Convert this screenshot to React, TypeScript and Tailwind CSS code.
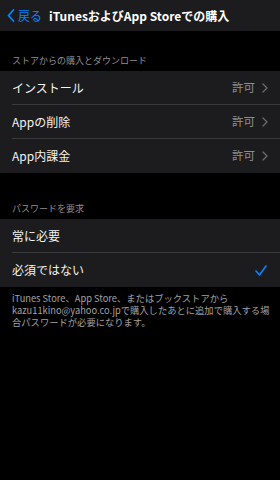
const font = { fontFamily: '"Noto Sans CJK JP", "Noto Sans", sans-serif' };

function Chevron() {
  return (
    <svg width="6" height="10" viewBox="0 0 6 10" className="ml-[7px]">
      <path d="M1 1l4 4-4 4" fill="none" stroke="#6b6b70" strokeWidth="1.3" strokeLinecap="round" strokeLinejoin="round" />
    </svg>
  );
}

function Row({ label, value, last, check }: { label: string; value?: string; last?: boolean; check?: boolean }) {
  return (
    <div className="flex h-[34px] items-center pl-3">
      <div className={`flex h-full flex-1 items-center pr-3 ${last ? "" : "border-b border-[#3a3a3c]"}`}>
        <span className="flex-1 text-[12px] text-[#f2f2f2]">{label}</span>
        {value && (
          <span className="flex items-center text-[11.5px] text-[#8e8e93]">
            {value}
            <Chevron />
          </span>
        )}
        {check && (
          <svg width="12" height="11" viewBox="0 0 12 11" className="mr-[1px]">
            <path d="M1 6l3.5 4L11 1" fill="none" stroke="#0a84ff" strokeWidth="1.6" strokeLinecap="round" strokeLinejoin="round" />
          </svg>
        )}
      </div>
    </div>
  );
}

export default function App() {
  return (
    <div className="h-[480px] w-[280px] bg-black" style={font}>
      <div className="flex h-[31px] items-center bg-[#1c1c1e] pl-[7px]">
        <svg width="8" height="13" viewBox="0 0 8 13">
          <path d="M6.5 1L1.5 6.5l5 5.5" fill="none" stroke="#0a84ff" strokeWidth="1.8" strokeLinecap="round" strokeLinejoin="round" />
        </svg>
        <span className="ml-[3px] text-[12px] text-[#0a84ff]">戻る</span>
        <span className="ml-[7px] text-[12px] font-bold text-white">iTunesおよびApp Storeでの購入</span>
      </div>
      <div className="px-3 pb-[4px] pt-[23px] text-[9px] leading-[13px] text-[#8e8e93]">ストアからの購入とダウンロード</div>
      <div className="bg-[#1c1c1e]">
        <Row label="インストール" value="許可" />
        <Row label="Appの削除" value="許可" />
        <Row label="App内課金" value="許可" last />
      </div>
      <div className="px-3 pb-[4px] pt-[29px] text-[9px] leading-[13px] text-[#8e8e93]">パスワードを要求</div>
      <div className="bg-[#1c1c1e]">
        <Row label="常に必要" />
        <Row label="必須ではない" check last />
      </div>
      <div className="pl-3 pr-[4px] pt-[5px] text-[9.3px] leading-[12px] text-[#a0a0a5]">
        iTunes Store、App Store、またはブックストアからkazu11kino@yahoo.co.jpで購入したあとに追加で購入する場合パスワードが必要になります。
      </div>
    </div>
  );
}
